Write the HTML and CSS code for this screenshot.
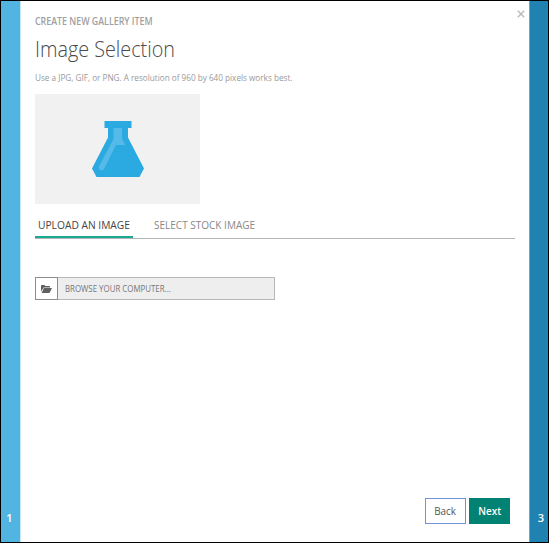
FILE: index.html
```html
<!DOCTYPE html>
<html lang="en">
<head>
<meta charset="utf-8">
<title>Create new gallery item</title>
<link rel="stylesheet" href="styles.css">
</head>
<body>
<div class="wizard">
  <aside class="step step-prev">1</aside>
  <main class="panel">
    <button class="close" aria-label="Close"><svg width="8" height="8" viewBox="0 0 8 8"><path d="M.8.8l6.4 6.4M7.2.8L.8 7.2"/></svg></button>
    <div class="eyebrow"><span>CREATE NEW GALLERY ITEM</span></div>
    <h1 class="title"><span>Image Selection</span></h1>
    <p class="hint"><span>Use a JPG, GIF, or PNG. A resolution of 960 by 640 pixels works best.</span></p>
    <div class="preview">
      <svg width="52" height="56" viewBox="0 0 52 56">
        <path fill="#2ba9e1" d="M12.5 0h27v7H36v9.500L52 47.500 47.500 56H4.500L0 47.500 16 16.500V7h-3.500z"/>
        <path fill="#55bae7" d="M21.500 7h8.500v10l3 7h-9L11.500 49H7.800L6.300 46.800 21.500 18z"/>
      </svg>
    </div>
    <nav class="tabs">
      <a class="tab tab-active"><span>UPLOAD AN IMAGE</span></a>
      <a class="tab"><span>SELECT STOCK IMAGE</span></a>
    </nav>
    <div class="browse">
      <div class="browse-icon">
        <svg width="11" height="8" viewBox="0 0 11 8"><path d="M0 6.500V.8Q0 0 .8 0h2.700l.8 1h4Q9 1 9 1.800V2.500H2.700z"/><path d="M2.900 3.100H11L8.900 7.300Q8.600 8 8 8H.6z"/></svg>
      </div>
      <div class="browse-label"><span>BROWSE YOUR COMPUTER...</span></div>
    </div>
    <footer class="actions">
      <button class="btn btn-back"><span>Back</span></button>
      <button class="btn btn-next"><span>Next</span></button>
    </footer>
  </main>
  <aside class="step step-next">3</aside>
</div>
</body>
</html>
```
FILE: styles.css
```css
* { box-sizing: border-box; }
body {
  margin: 0;
  font-family: "Open Sans", "Noto Sans", sans-serif;
  color: #555;
}
.wizard {
  display: flex;
  width: 549px;
  height: 543px;
  border: 1px solid #000;
  background: #fff;
}
.step {
  display: flex;
  align-items: flex-end;
  justify-content: center;
  padding-bottom: 16px;
  color: #fff;
  font-size: 11px;
  line-height: 16px;
  font-weight: 600;
}
.step-prev { width: 20px; background: #52b5e1; border-right: 1px solid #c9e8f6; padding-right: 2px; }
.step-next { width: 19px; background: #2082b0; border-left: 1px solid #62a8c9; padding-left: 4px; }
.panel {
  position: relative;
  flex: 1;
  display: flex;
  flex-direction: column;
  padding: 13px 14px 18px;
}
/* Condensed text */
.panel span {
  display: inline-block;
  white-space: nowrap;
  transform-origin: left center;
}
.close {
  position: absolute;
  top: 9px;
  right: 4px;
  display: flex;
  padding: 0;
  border: 0;
  background: none;
}
.close path { stroke: #bdbdbd; stroke-width: 1.500; fill: none; }
.eyebrow {
  font-size: 10px;
  line-height: 14px;
  font-weight: 600;
  color: #a0a0a0;
}
.eyebrow span { transform: scaleX(.885); }
.title {
  margin: 7px 0 0;
  font-size: 21.500px;
  line-height: 28px;
  font-weight: 300;
  color: #4a4a4a;
}
.title span { transform: scaleX(.92); }
.hint {
  margin: 8px 0 0;
  font-size: 9px;
  line-height: 14px;
  color: #999;
}
.hint span { transform: scaleX(.907); }
.preview {
  display: flex;
  align-items: center;
  justify-content: center;
  width: 165px;
  height: 110px;
  margin-top: 9px;
  background: #f1f1f1;
}
.tabs {
  display: flex;
  gap: 18px;
  height: 34px;
  margin-top: 1px;
  border-bottom: 1px solid #b5b5b5;
}
.tab {
  height: 33px;
  padding: 11px 3px 0;
  font-size: 11px;
  line-height: 18px;
  color: #888;
}
.tab span { transform: scaleX(.91); }
.tab-active { width: 98px; border-bottom: 2px solid #1aab94; color: #444; }
.tab-active span { transform: scaleX(.93); }
.browse {
  display: flex;
  width: 240px;
  height: 23px;
  margin-top: 38px;
  border: 1px solid #b8b8b8;
  background: #eee;
}
.browse-icon {
  display: flex;
  align-items: center;
  justify-content: center;
  width: 23px;
  height: 23px;
  margin: -1px 0 0 -1px;
  border: 1px solid #8c8c8c;
  background: #fff;
}
.browse-icon path { fill: #606060; }
.browse-label {
  padding-left: 7px;
  font-size: 9px;
  line-height: 21px;
  color: #777;
}
.browse-label span { transform: scaleX(.876); }
.actions {
  display: flex;
  justify-content: flex-end;
  gap: 3px;
  margin-top: auto;
  padding-right: 5px;
}
.btn {
  height: 26px;
  padding: 0;
  font: 400 11px/24px "Open Sans", "Noto Sans", sans-serif;
}
.panel .btn span { transform: scaleX(.9); transform-origin: center; }
.btn-back { width: 41px; border: 1px solid #6f94d8; background: #fff; color: #555; }
.btn-next { width: 41px; border: 1px solid #028272; background: #028272; color: #fff; font-weight: 600; }
```
